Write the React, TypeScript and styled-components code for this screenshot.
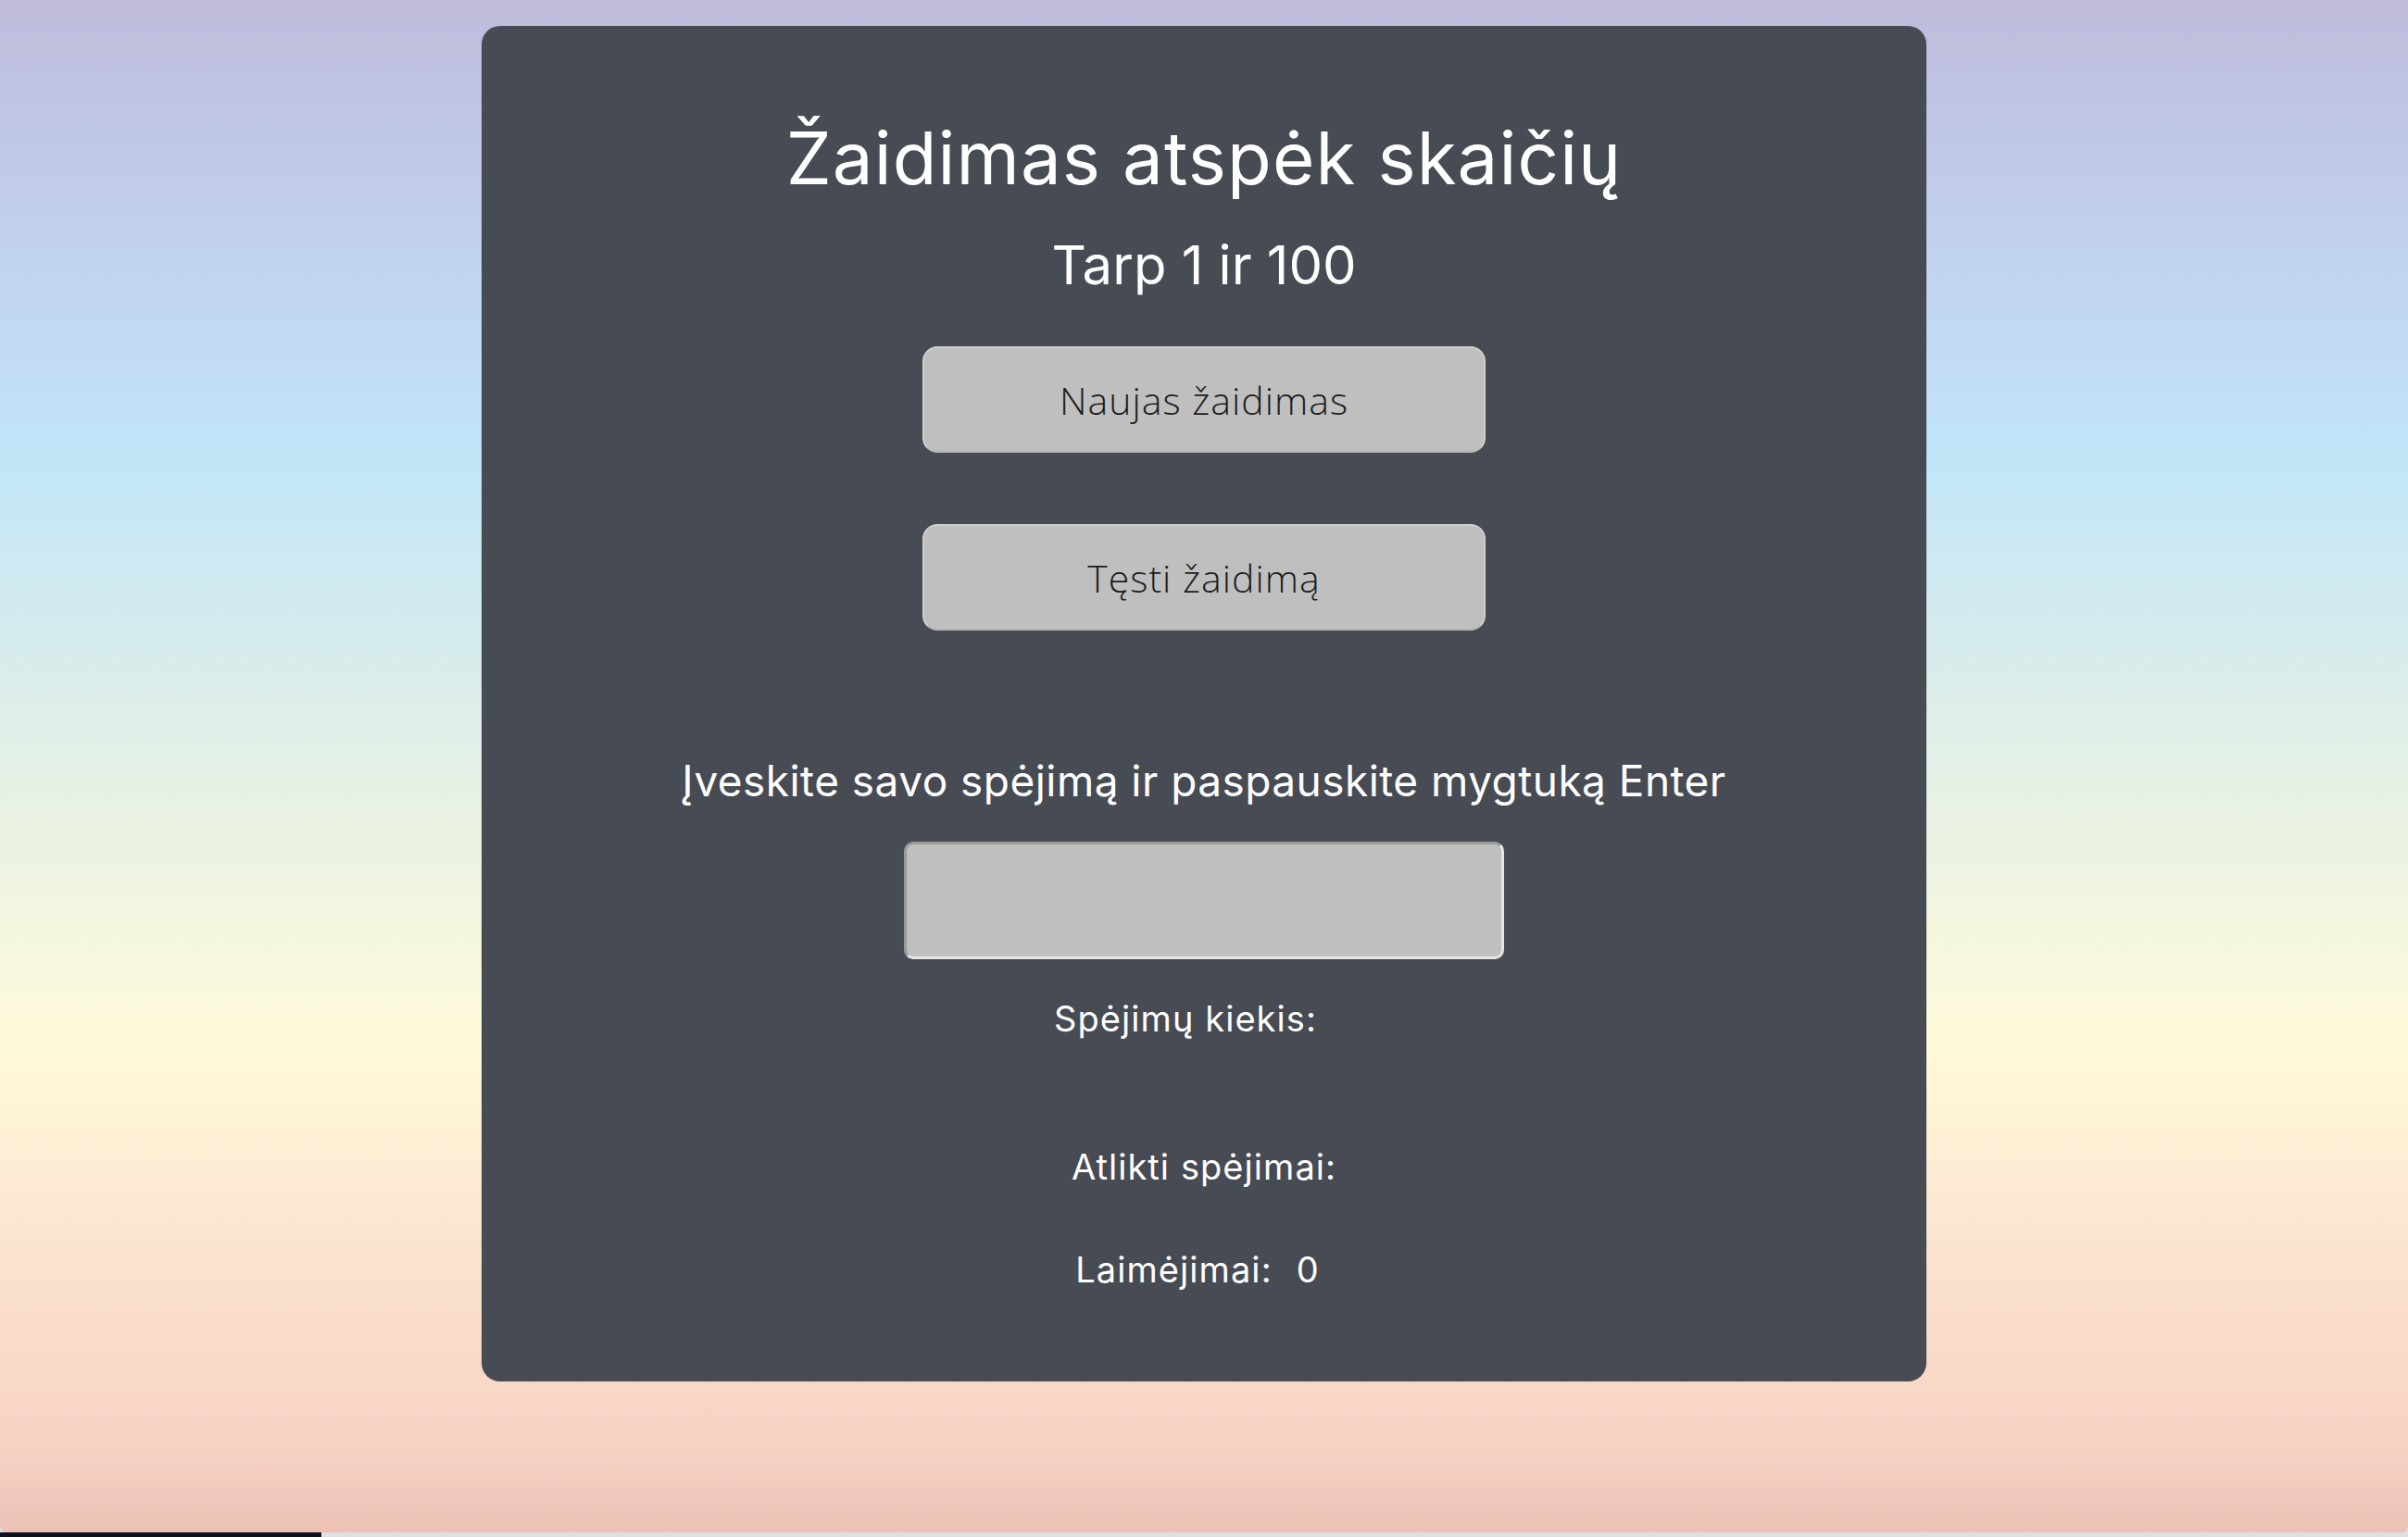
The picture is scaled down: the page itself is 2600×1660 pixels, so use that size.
import React from "react";
import styled, { createGlobalStyle } from "styled-components";

const Global = createGlobalStyle`
  html, body {
    margin: 0;
    padding: 0;
    background: #dcdde0;
  }
  * { box-sizing: border-box; }
`;

const Screen = styled.div`
  width: 2600px;
  height: 1660px;
  display: flex;
  flex-direction: column;
  overflow: hidden;
`;

const Page = styled.main`
  height: 1655px;
  display: flex;
  flex-direction: column;
  align-items: center;
  padding-top: 28px;
  border-radius: 0 0 8px 8px;
  background:
    linear-gradient(to bottom, rgba(120, 60, 40, 0) calc(100% - 90px), rgba(120, 60, 40, 0.07) 100%),
    linear-gradient(
      to bottom,
      #bfbbdb 0%,
      #c1d4f0 18%,
      #c2e5f8 30%,
      #e4f0e6 50%,
      #fffadb 68%,
      #fbe3ce 82%,
      #f5cbbf 100%
    );
`;

const BottomStrip = styled.div`
  height: 5px;
  display: flex;
`;

const StripPart = styled.div<{ $dark?: boolean }>`
  width: ${(p) => (p.$dark ? "347px" : "auto")};
  flex: ${(p) => (p.$dark ? "0 0 auto" : "1")};
  background: ${(p) => (p.$dark ? "#0b1322" : "#dedfe2")};
`;

const Card = styled.section`
  width: 60%;
  height: 1464px;
  background: #474b53;
  border-radius: 20px;
  display: flex;
  flex-direction: column;
  align-items: center;
  padding-top: 104px;
  font-family: Inter, "Noto Sans", sans-serif;
  color: #ffffff;
`;

const Title = styled.h1`
  margin: 0;
  font-size: 78px;
  font-weight: 400;
  line-height: 1;
  letter-spacing: 0.014em;
`;

const Subtitle = styled.h2`
  margin: 47px 0 0;
  font-size: 58px;
  font-weight: 400;
  line-height: 1;
  letter-spacing: 0;
`;

const GameButton = styled.button<{ $gap: number }>`
  margin-top: ${(p) => p.$gap}px;
  width: 608px;
  height: 115px;
  background: #bfbfbf;
  border: 2px solid #cfcfcf;
  border-bottom-color: #b4b4b4;
  border-radius: 16px;
  font-family: "Open Sans", "Noto Sans", sans-serif;
  font-weight: 300;
  font-size: 41px;
  letter-spacing: 0.025em;
  color: #1c1c1c;
  display: flex;
  align-items: center;
  justify-content: center;
  cursor: pointer;
`;

const Prompt = styled.p`
  margin: 139px 0 0;
  font-size: 46px;
  font-weight: 400;
  line-height: 1;
  letter-spacing: 0.01em;
`;

const GuessInput = styled.input`
  margin-top: 43px;
  width: 648px;
  height: 127px;
  background: #bfbfbf;
  border: 3px solid;
  border-color: #9a9a9a #e6e6e6 #e6e6e6 #9a9a9a;
  border-radius: 10px;
  font-size: 40px;
  padding: 0 20px;
  outline: none;
`;

const StatLine = styled.p<{ $gap: number }>`
  margin: ${(p) => p.$gap}px 0 0;
  font-size: 38px;
  font-weight: 400;
  line-height: 1;
  letter-spacing: 0.028em;
`;

const StatValue = styled.span`
  display: inline-block;
  margin: 0 14px 0 26px;
`;

export default function App() {
  return (
    <>
      <Global />
      <Screen>
        <Page>
          <Card>
            <Title>Žaidimas atspėk skaičių</Title>
            <Subtitle>Tarp 1 ir 100</Subtitle>
            <GameButton $gap={59}>Naujas žaidimas</GameButton>
            <GameButton $gap={77}>Tęsti žaidimą</GameButton>
            <Prompt>Įveskite savo spėjimą ir paspauskite mygtuką Enter</Prompt>
            <GuessInput type="text" aria-label="Spėjimas" />
            <StatLine $gap={45}>
              Spėjimų kiekis:<StatValue></StatValue>
            </StatLine>
            <StatLine $gap={122}>Atlikti spėjimai:</StatLine>
            <StatLine $gap={73}>
              Laimėjimai:<StatValue>0</StatValue>
            </StatLine>
          </Card>
        </Page>
        <BottomStrip>
          <StripPart $dark />
          <StripPart />
        </BottomStrip>
      </Screen>
    </>
  );
}
